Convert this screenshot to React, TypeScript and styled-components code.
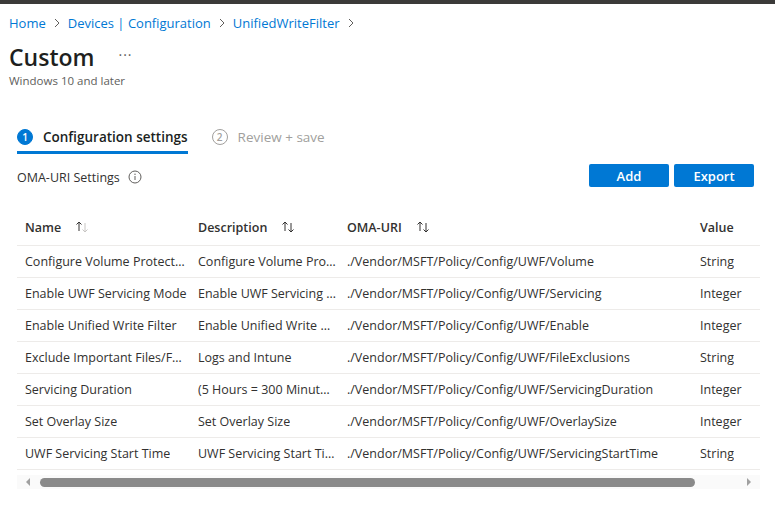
import styled, {createGlobalStyle} from 'styled-components';

const GlobalStyle = createGlobalStyle`
  html, body {
    margin: 0;
    padding: 0;
    background: #fff;
    font-family: "Segoe UI", "Open Sans", "Noto Sans", sans-serif;
    color: #323130;
  }
`;

const Page = styled.div`
  width: 775px;
  height: 507px;
  overflow: hidden;
  border-top: 4px solid #3b3a39;
  box-sizing: border-box;
`;

const Breadcrumb = styled.nav`
  display: flex;
  align-items: center;
  gap: 7px;
  padding: 9px 0 0 9px;
  height: 20px;
  font-size: 13px;
`;

const Crumb = styled.a`
  color: #0078d4;
  text-decoration: none;
`;

const Chevron = styled.span`
  display: flex;
`;

const TitleRow = styled.div`
  display: flex;
  align-items: center;
  gap: 24px;
  padding: 10px 0 0 9px;
`;

const Title = styled.h1`
  margin: 0;
  font-size: 23px;
  font-weight: 600;
  color: #201f1e;
  line-height: 28px;
`;

const More = styled.span`
  font-size: 14px;
  color: #605e5c;
  letter-spacing: 1px;
  margin-top: -6px;
`;

const Subtitle = styled.div`
  padding: 2px 0 0 9px;
  font-size: 11.5px;
  color: #605e5c;
`;

const Tabs = styled.div`
  display: flex;
  gap: 24px;
  padding: 30px 0 0 17px;
`;

const Tab = styled.div<{ $active?: boolean }>`
  display: flex;
  align-items: center;
  gap: 10px;
  height: 28px;
  padding: 5px 0 0;
  border-bottom: 3px solid ${p => (p.$active ? '#0078d4' : 'transparent')};
  font-size: 13.5px;
  font-weight: ${p => (p.$active ? 600 : 400)};
  color: ${p => (p.$active ? '#201f1e' : '#a19f9d')};
`;

const StepDot = styled.span<{ $active?: boolean }>`
  width: 16px;
  height: 16px;
  border-radius: 50%;
  box-sizing: border-box;
  display: flex;
  align-items: center;
  justify-content: center;
  font-size: 10px;
  font-weight: 600;
  background: ${p => (p.$active ? '#0078d4' : '#fff')};
  color: ${p => (p.$active ? '#fff' : '#a19f9d')};
  border: 1px solid ${p => (p.$active ? '#0078d4' : '#a19f9d')};
`;

const Toolbar = styled.div`
  display: flex;
  align-items: center;
  justify-content: space-between;
  padding: 10px 21px 0 17px;
`;

const SectionLabel = styled.div`
  display: flex;
  align-items: center;
  gap: 8px;
  font-size: 12.5px;
  color: #323130;
  margin-top: 3px;
`;

const Buttons = styled.div`
  display: flex;
  gap: 5px;
`;

const Button = styled.button`
  width: 80px;
  height: 23px;
  border: none;
  border-radius: 2px;
  background: #0078d4;
  color: #fff;
  font-family: inherit;
  font-size: 13px;
  font-weight: 600;
  padding: 0;
`;

const TableWrap = styled.div`
  margin: 24px 15px 0 17px;
  overflow: hidden;
`;

const Table = styled.div`
  display: grid;
  grid-template-columns: 173px 149px 353px 80px;
  width: 755px;
`;

const HeaderCell = styled.div`
  display: flex;
  align-items: center;
  gap: 14px;
  height: 32px;
  padding: 0 8px 2px;
  font-size: 12.5px;
  font-weight: 600;
  color: #323130;
  border-bottom: 1px solid #edebe9;
`;

const Cell = styled.div`
  height: 31px;
  display: flex;
  align-items: center;
  padding: 0 3px 0 8px;
  font-size: 12.5px;
  color: #323130;
  border-bottom: 1px solid #edebe9;
  white-space: nowrap;
  overflow: hidden;
  min-width: 0;

  & > span {
    overflow: hidden;
    text-overflow: ellipsis;
  }
`;

const ScrollBar = styled.div`
  margin: 5px 15px 0 17px;
  height: 14px;
  background: #fafafa;
  display: flex;
  align-items: center;
  gap: 9px;
  padding: 0 8px;
`;

const Thumb = styled.div`
  width: 655px;
  height: 9px;
  border-radius: 5px;
  background: #8a8a8a;
`;

const Arrow = styled.span`
  display: flex;
  margin-left: auto;
`;

const SortIcon = ({light}: { light?: boolean }) => (
    <svg width="14" height="14" viewBox="0 0 14 14" fill="none" strokeWidth="1">
        <path d="M4 11V2M1.5 4.5L4 2l2.5 2.5" stroke="#323130"/>
        <path d="M10 3v9M7.5 9.5L10 12l2.5-2.5" stroke={light ? '#c8c6c4' : '#323130'}/>
    </svg>
);

const ChevronIcon = () => (
    <svg width="8" height="10" viewBox="0 0 8 10" fill="none">
        <path d="M2 1l4 4-4 4" stroke="#605e5c" strokeWidth="1"/>
    </svg>
);

const InfoIcon = () => (
    <svg width="14" height="14" viewBox="0 0 14 14" fill="none">
        <circle cx="7" cy="7" r="6" stroke="#605e5c"/>
        <path d="M7 6v4" stroke="#605e5c"/>
        <circle cx="7" cy="4.2" r="0.7" fill="#605e5c"/>
    </svg>
);

const rows = [
    ['Configure Volume Protection', 'Configure Volume Protection', './Vendor/MSFT/Policy/Config/UWF/Volume', 'String'],
    ['Enable UWF Servicing Mode', 'Enable UWF Servicing Mode', './Vendor/MSFT/Policy/Config/UWF/Servicing', 'Integer'],
    ['Enable Unified Write Filter', 'Enable Unified Write Filter', './Vendor/MSFT/Policy/Config/UWF/Enable', 'Integer'],
    ['Exclude Important Files/Folders', 'Logs and Intune', './Vendor/MSFT/Policy/Config/UWF/FileExclusions', 'String'],
    ['Servicing Duration', '(5 Hours = 300 Minutes)', './Vendor/MSFT/Policy/Config/UWF/ServicingDuration', 'Integer'],
    ['Set Overlay Size', 'Set Overlay Size', './Vendor/MSFT/Policy/Config/UWF/OverlaySize', 'Integer'],
    ['UWF Servicing Start Time', 'UWF Servicing Start Time', './Vendor/MSFT/Policy/Config/UWF/ServicingStartTime', 'String'],
];

const App = () => {
    return (
        <Page>
            <GlobalStyle/>
            <Breadcrumb>
                <Crumb>Home</Crumb>
                <Chevron><ChevronIcon/></Chevron>
                <Crumb>Devices | Configuration</Crumb>
                <Chevron><ChevronIcon/></Chevron>
                <Crumb>UnifiedWriteFilter</Crumb>
                <Chevron><ChevronIcon/></Chevron>
            </Breadcrumb>
            <TitleRow>
                <Title>Custom</Title>
                <More>···</More>
            </TitleRow>
            <Subtitle>Windows 10 and later</Subtitle>
            <Tabs>
                <Tab $active>
                    <StepDot $active>1</StepDot>
                    Configuration settings
                </Tab>
                <Tab>
                    <StepDot>2</StepDot>
                    Review + save
                </Tab>
            </Tabs>
            <Toolbar>
                <SectionLabel>
                    OMA-URI Settings
                    <InfoIcon/>
                </SectionLabel>
                <Buttons>
                    <Button>Add</Button>
                    <Button>Export</Button>
                </Buttons>
            </Toolbar>
            <TableWrap>
                <Table>
                    <HeaderCell>Name <SortIcon light/></HeaderCell>
                    <HeaderCell>Description <SortIcon/></HeaderCell>
                    <HeaderCell>OMA-URI <SortIcon/></HeaderCell>
                    <HeaderCell>Value</HeaderCell>
                    {rows.map((r) => r.map((c, i) => (
                        <Cell key={r[2] + i}><span>{c}</span></Cell>
                    )))}
                </Table>
            </TableWrap>
            <ScrollBar>
                <svg width="6" height="8" viewBox="0 0 6 8"><path d="M5 0v8L1 4z" fill="#a0a0a0"/></svg>
                <Thumb/>
                <Arrow>
                    <svg width="6" height="8" viewBox="0 0 6 8"><path d="M1 0v8l4-4z" fill="#a0a0a0"/></svg>
                </Arrow>
            </ScrollBar>
        </Page>
    );
};

export default App;
